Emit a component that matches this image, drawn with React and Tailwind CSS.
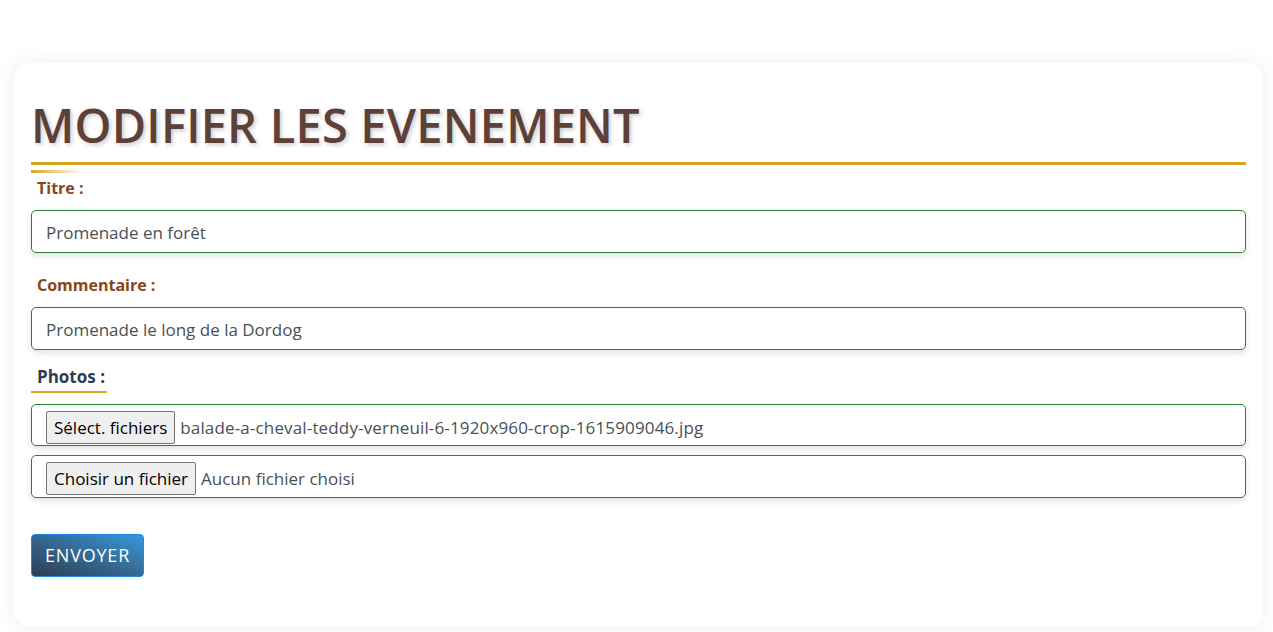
export default function App() {
  const font = { fontFamily: '"Open Sans", "Noto Sans", sans-serif' };
  return (
    <div className="min-h-screen bg-white pt-[63px] pl-[14px] pr-[10px]" style={font}>
      <div className="rounded-[16px] bg-white shadow-[0_0_22px_rgba(0,0,0,0.07)] px-[17px] pt-[34px] pb-[50px]">
        <h1 className="text-[47px] leading-[1.23] font-semibold uppercase tracking-[0.2px] text-[#5d4037] [text-shadow:2px_2px_4px_rgba(0,0,0,0.2)] pb-[7px] border-b-[3px] border-[#daa520]">
          Modifier les evenement
        </h1>
        <div className="mt-[5px] h-[3px] w-[52px] bg-gradient-to-r from-[#daa520] to-transparent" />
        <form className="flex flex-col">
          <label className="mt-[3px] pl-[6px] text-[16px] leading-[24px] font-bold text-[#8b4513]">Titre :</label>
          <div className="mt-[10px] h-[43px] flex items-center pt-[2px] px-[14px] border border-[#2e7d32] rounded-[5px] shadow-[0_3px_6px_rgba(0,0,0,0.12)] text-[17px] text-[#495057]">
            Promenade en forêt
          </div>
          <label className="mt-[20px] pl-[6px] text-[16px] leading-[24px] font-bold text-[#8b4513]">Commentaire :</label>
          <div className="mt-[10px] h-[43px] flex items-center pt-[2px] px-[14px] border border-[#2e7d32] rounded-[5px] shadow-[0_3px_6px_rgba(0,0,0,0.12)] text-[17px] text-[#495057]">
            Promenade le long de la Dordog
          </div>
          <div className="mt-[15px]">
            <span className="inline-block pl-[6px] pr-[2px] text-[17px] leading-[24px] font-bold text-[#2c3e50] pb-[2px] border-b-2 border-[#daa520]">Photos :</span>
          </div>
          <div className="mt-[11px] h-[42px] flex items-start pt-[6px] px-[14px] border border-[#2e7d32] rounded-[5px] shadow-[0_3px_6px_rgba(0,0,0,0.12)] text-[17px] text-[#495057]">
            <span className="h-[33px] flex items-center px-[7px] bg-[#efefef] border border-[#767676] rounded-[2px] text-black">Sélect. fichiers</span>
            <span className="ml-[5px] h-[33px] flex items-center tracking-[0.15px]">balade-a-cheval-teddy-verneuil-6-1920x960-crop-1615909046.jpg</span>
          </div>
          <div className="mt-[9px] h-[43px] flex items-start pt-[6px] px-[14px] border border-[#2e7d32] rounded-[5px] shadow-[0_3px_6px_rgba(0,0,0,0.12)] text-[17px] text-[#495057]">
            <span className="h-[33px] flex items-center px-[7px] bg-[#efefef] border border-[#767676] rounded-[2px] text-black">Choisir un fichier</span>
            <span className="ml-[5px] h-[33px] flex items-center">Aucun fichier choisi</span>
          </div>
          <div className="mt-[36px]">
            <button type="button" className="h-[43px] px-[13px] rounded-[4px] border border-[#1e88e5] bg-gradient-to-tr from-[#2c3e50] to-[#3498db] text-white text-[18px] tracking-[0.8px] uppercase">
              Envoyer
            </button>
          </div>
        </form>
      </div>
    </div>
  );
}
